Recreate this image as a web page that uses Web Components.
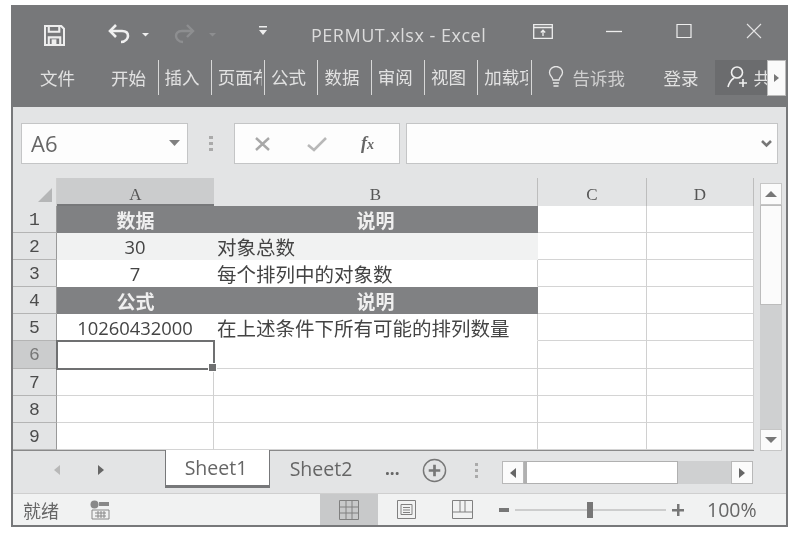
<!DOCTYPE html>
<html lang="zh">
<head>
<meta charset="utf-8">
<title>PERMUT.xlsx - Excel</title>
<style>
  html, body { margin: 0; background: #fff; }
  body { padding: 5px 0 0 11px; font-family: "Noto Sans CJK SC", sans-serif; }
</style>
</head>
<body>
<excel-window>
  <title-bar></title-bar>
  <ribbon-tabs></ribbon-tabs>
  <formula-bar></formula-bar>
  <sheet-grid></sheet-grid>
  <sheet-tabs></sheet-tabs>
  <status-bar></status-bar>
</excel-window>

<script>
const UI_FONT = '"Open Sans", "Noto Sans", "Noto Sans CJK SC", sans-serif';
const CJK_FONT = '"Noto Sans CJK SC", sans-serif';
const GRID_FONT = '"Liberation Mono", "Noto Sans CJK SC", monospace';

class ExcelWindow extends HTMLElement {
  constructor() {
    super();
    this.attachShadow({ mode: "open" });
    this.shadowRoot.innerHTML = `
      <style>
        :host {
          display: flex;
          flex-direction: column;
          width: 777px;
          height: 522px;
          box-sizing: border-box;
          border: solid #77787a;
          border-width: 0 2px 2px 2px;
          background: #e3e4e5;
          filter: blur(.35px);
        }
      </style>
      <slot></slot>
    `;
  }
}

class TitleBar extends HTMLElement {
  constructor() {
    super();
    this.attachShadow({ mode: "open" });
    this.shadowRoot.innerHTML = `
      <style>
        :host {
          display: flex;
          align-items: center;
          height: 52px;
          margin: 0 -2px;
          padding-top: 8px;
          box-sizing: border-box;
          background: #77787a;
          color: #dcdcdc;
          font: 18px ${UI_FONT};
          flex: none;
        }
        svg { display: block; flex: none; }
        .title { margin-left: 42px; width: 222px; white-space: nowrap; letter-spacing: .5px; margin-top: -1px; }
        .up { margin-bottom: 8px; }
      </style>
      <svg style="margin-left:33px" width="21" height="21" viewBox="0 0 22 22" fill="none" stroke="#eee" stroke-width="2.200">
        <path d="M1 1h17l3 3v17H1z"/><path d="M5 2v5h11V2M5 20v-7h12v7"/><path d="M8 15h5v5H8z" fill="#eee" stroke="none"/>
      </svg>
      <svg style="margin-left:43px" width="46" height="22" viewBox="0 0 46 22" fill="none">
        <path d="M2 7h12c5 0 6 3 6 5s-2 6-7 6" stroke="#f0f0f0" stroke-width="2.600"/>
        <path d="M8 1 2 7l6 6" stroke="#f0f0f0" stroke-width="2.600"/>
        <path d="M34 9h7l-3.500 3.500z" fill="#eee"/>
      </svg>
      <svg style="margin-left:18px" width="46" height="22" viewBox="0 0 46 22" fill="none">
        <path d="M20 7H10c-5 0-6 3-6 5s2 6 7 6" stroke="#8d8e90" stroke-width="2.400"/>
        <path d="M15 1l6 6-6 6" stroke="#8d8e90" stroke-width="2.400"/>
        <path d="M37 9h7l-3.500 3.500z" fill="#8d8e90"/>
      </svg>
      <svg class="up" style="margin-left:39px" width="12" height="12" viewBox="0 0 12 12" fill="#eee">
        <path d="M2 1h8v1.500H2zM2 5h8L6 10z"/>
      </svg>
      <span class="title">PERMUT.xlsx - Excel</span>
      <svg class="up" width="20" height="15" viewBox="0 0 20 15" fill="none" stroke="#eee" stroke-width="1.300">
        <path d="M.7.7h18.600v13.600H.7zM.7 3.500h18.600"/><path d="M10 12V6.500M7.800 8.500 10 6.200l2.200 2.300"/>
      </svg>
      <svg class="up" style="margin-left:53px" width="16" height="16" viewBox="0 0 16 16" stroke="#eee" stroke-width="1.300"><path d="M0 8.500h16"/></svg>
      <svg class="up" style="margin-left:54px" width="16" height="16" viewBox="0 0 16 16" fill="none" stroke="#eee" stroke-width="1.200"><path d="M1 1.500h14v13H1z"/></svg>
      <svg class="up" style="margin-left:54px" width="16" height="16" viewBox="0 0 16 16" stroke="#e4e4e4" stroke-width="1.100"><path d="M1 1l14 14M15 1 1 15"/></svg>
    `;
  }
}

class RibbonTabs extends HTMLElement {
  constructor() {
    super();
    this.attachShadow({ mode: "open" });
    const tabs = ["插入", "页面布局", "公式", "数据", "审阅", "视图", "加载项"];
    this.shadowRoot.innerHTML = `
      <style>
        :host {
          display: flex;
          align-items: center;
          height: 50px;
          margin: 0 -2px;
          padding-bottom: 10px;
          box-sizing: border-box;
          background: #77787a;
          color: #e2e2e2;
          font: 17.500px ${CJK_FONT};
          position: relative;
          flex: none;
        }
        span { white-space: nowrap; flex: none; }
        .tab { width: 53.300px; height: 35px; line-height: 34px; box-sizing: border-box; border-left: 1px solid #d8d8d8; padding-left: 6px; }
        .tab b { display: block; width: 44px; overflow: hidden; font-weight: 400; }
        .file { margin-left: 29px; width: 37px; }
        .home { margin-left: 34px; width: 46.500px; }
        .tell { border-left: 1px solid #d8d8d8; height: 35px; display: flex; align-items: center; padding-left: 16px; width: 133px; box-sizing: border-box; color: #cfcfcf; gap: 9px; }
        .login { width: 51px; }
        .share { width: 52px; height: 35px; display: flex; align-items: center; gap: 6px; padding-left: 12px; box-sizing: border-box; background: #6b6c6e; overflow: hidden; }
        .more { position: absolute; left: 756px; top: 3px; width: 19px; height: 36px; box-sizing: border-box; background: #fafafa; border: 1px solid #bbb; display: flex; align-items: center; justify-content: center; }
      </style>
      <span class="file">文件</span>
      <span class="home">开始</span>
      ${tabs.map(t => `<span class="tab"><b>${t}</b></span>`).join("")}
      <span class="tell">
        <svg width="16" height="22" viewBox="0 0 16 22" fill="none" stroke="#e6e6e6" stroke-width="1.300"><path d="M5 14c0-3-3.500-4-3.500-7.500a6.500 6 0 0 1 13 0C14.500 10 11 11 11 14zM5 17h6M5.500 20h5"/></svg>
        告诉我
      </span>
      <span class="login">登录</span>
      <span class="share">
        <svg width="21" height="22" viewBox="0 0 21 22" fill="none" stroke="#f0f0f0" stroke-width="1.600" style="flex:none"><ellipse cx="10" cy="6.500" rx="5.500" ry="5.500"/><path d="M1 21c1-4 3-7 6-9M12 17h8M16 13v8"/></svg>
        共
      </span>
      <span class="more"><svg width="5" height="8" viewBox="0 0 5 8" fill="#777"><path d="M0 0l5 4-5 4z"/></svg></span>
    `;
  }
}

class FormulaBar extends HTMLElement {
  constructor() {
    super();
    this.attachShadow({ mode: "open" });
    this.shadowRoot.innerHTML = `
      <style>
        :host {
          display: flex;
          align-items: flex-start;
          height: 71px;
          box-sizing: border-box;
          padding: 16px 0 0 8px;
          font-family: ${UI_FONT};
          color: #6c6c6c;
          flex: none;
        }
        .box { height: 41px; box-sizing: border-box; background: #fdfdfd; border: 1px solid #c4c5c6; display: flex; align-items: center; flex: none; }
        .name { width: 167px; padding: 0 7px 2px 9px; justify-content: space-between; font-size: 22px; color: #666; }
        .grip { width: 46px; height: 41px; display: flex; align-items: center; justify-content: center; flex: none; }
        .fx { width: 166px; }
        .input { width: 372px; margin-left: 6px; justify-content: flex-end; padding-right: 5px; }
        i { font: italic bold 18px "Liberation Serif", serif; color: #666; }
      </style>
      <div class="box name">A6
        <svg width="11" height="6" viewBox="0 0 11 6" fill="#808080"><path d="M0 0h11L5.500 6z"/></svg>
      </div>
      <div class="grip"><svg width="4" height="16" viewBox="0 0 4 16" fill="#aaa"><path d="M0 0h4v3H0zM0 6h4v3H0zM0 12h4v3H0z"/></svg></div>
      <div class="box fx">
        <svg style="margin-left:19px" width="18" height="16" viewBox="0 0 18 16" stroke="#a8a8a8" stroke-width="2.400"><path d="M2 2l13 12M15 2 2 14"/></svg>
        <svg style="margin-left:35px" width="20" height="16" viewBox="0 0 20 16" fill="none" stroke="#b8b8b8" stroke-width="2.600"><path d="M1 9l6 5L19 2"/></svg>
        <i style="margin-left:34px">f<span style="font-size:14px">x</span></i>
      </div>
      <div class="box input"><svg width="11" height="8" viewBox="0 0 11 8" fill="none" stroke="#777" stroke-width="2.600"><path d="M1 1l4.500 4.500L10 1"/></svg></div>
    `;
  }
}

class SheetGrid extends HTMLElement {
  constructor() {
    super();
    this.attachShadow({ mode: "open" });
    const rows = [
      ["数据", "说明", "head"],
      ["30", "对象总数", "alt"],
      ["7", "每个排列中的对象数", "plain"],
      ["公式", "说明", "head"],
      ["10260432000", "在上述条件下所有可能的排列数量", "plain"],
      ["", "", "sel"],
      ["", "", ""],
      ["", "", ""],
      ["", "", ""],
    ];
    const body = rows.map((r, i) => {
      const bCls = r[2] === "head" ? "b c" : "b";
      return `
        <div class="rh ${r[2] === "sel" ? "on" : ""}">${i + 1}</div>
        <div class="cell a ${r[2]}">${r[0]}</div>
        <div class="cell ${bCls} ${r[2]}">${r[1]}</div>
        <div class="cell"></div>
        <div class="cell"></div>`;
    }).join("");
    this.shadowRoot.innerHTML = `
      <style>
        :host {
          display: flex;
          height: 273px;
          font-family: ${GRID_FONT};
          color: #555;
          flex: none;
        }
        .grid {
          display: grid;
          grid-template-columns: 44px 157px 324px 109px 107px;
          grid-template-rows: 28px repeat(9, 27.100px);
          width: 741px;
          height: 272px;
          background: #fff;
          border-bottom: 1px solid #8a8a8a;
        }
        .corner { background: #e3e4e5; display: flex; align-items: flex-end; justify-content: flex-end; padding: 0 4px 4px 0; border-right: 1px solid #cfcfcf; }
        .ch { background: #e3e4e5; border-right: 1px solid #bdbdbd; text-align: center; font: 17px/34px "Liberation Serif", serif; overflow: hidden; }
        .ch.on { background: #cbcccd; border-bottom: 2px solid #77787a; border-right: 0; }
        .rh { background: #e3e4e5; border-bottom: 1px solid #b4b4b4; border-right: 1px solid #999; text-align: center; font-size: 18px; line-height: 29px; color: #4c4c4c; overflow: hidden; }
        .rh.on { background: #cbcccd; color: #777; border-right-color: #77787a; }
        .cell { border-right: 1px solid #d0d0d0; border-bottom: 1px solid #d4d4d4; font: 19.500px/27px "Noto Sans CJK SC", sans-serif; white-space: nowrap; overflow: hidden; color: #444; }
        .a { text-align: center; font-family: "Open Sans", "Noto Sans CJK SC", sans-serif; font-size: 18.400px; }
        .b { padding-left: 3px; }
        .c { text-align: center; padding-left: 0; }
        .head { background: #808183; color: #efefef; font-weight: 700; font-size: 19px; font-family: "Noto Sans CJK SC", sans-serif; border-color: #808183; }
        .head.a { border-right: 0; }
        .alt { background: #f1f2f2; border-color: #f1f2f2; }
        .plain.a { border-right-color: #fff; }
        .plain { border-bottom-color: #fff; }
        .sel { outline: 2px solid #6f7071; outline-offset: -1px; position: relative; overflow: visible; }
        .sel.a { z-index: 1; }
        .sel.a::after { content: ""; position: absolute; right: -4px; bottom: -4px; width: 7px; height: 7px; background: #6f7071; border: 1px solid #fff; }
        .sel.b { outline: 0; }
        .bar { width: 22px; margin-left: 6px; display: flex; flex-direction: column; padding-top: 5px; box-sizing: border-box; flex: none; }
        .btn { height: 22px; background: #fbfbfb; border: 1px solid #c6c6c6; box-sizing: border-box; display: flex; align-items: center; justify-content: center; flex: none; }
        .thumb { height: 100px; background: #fbfbfb; border: 1px solid #bcbcbc; box-sizing: border-box; flex: none; }
        .track { flex: 1; background: #cfd0d1; }
      </style>
      <div class="grid">
        <div class="corner"><svg width="14" height="14" viewBox="0 0 14 14" fill="#b5b6b7"><path d="M14 0v14H0z"/></svg></div>
        <div class="ch on">A</div><div class="ch">B</div><div class="ch">C</div><div class="ch">D</div>
        ${body}
      </div>
      <div class="bar">
        <div class="btn"><svg width="12" height="6" viewBox="0 0 12 6" fill="#777"><path d="M0 6l6-6 6 6z"/></svg></div>
        <div class="thumb"></div>
        <div class="track"></div>
        <div class="btn"><svg width="12" height="6" viewBox="0 0 12 6" fill="#777"><path d="M0 0l6 6 6-6z"/></svg></div>
      </div>
    `;
  }
}

class SheetTabs extends HTMLElement {
  constructor() {
    super();
    this.attachShadow({ mode: "open" });
    this.shadowRoot.innerHTML = `
      <style>
        :host {
          display: flex;
          align-items: flex-start;
          height: 42px;
          font: 19.500px ${UI_FONT};
          color: #666;
          flex: none;
        }
        .nav { width: 152px; height: 37px; display: flex; align-items: center; padding-left: 41px; gap: 38px; box-sizing: border-box; flex: none; }
        .tab { width: 105px; height: 37px; box-sizing: border-box; text-align: center; line-height: 35px; flex: none; }
        .cur { background: #fff; border: solid #77787a; border-width: 0 1px 3px 1px; margin-top: -1px; height: 38px; padding-right: 3px; }
        .next { padding-right: 3px; }
        .dots { margin-left: 10px; width: 37px; font-size: 17px; font-weight: 700; line-height: 36px; flex: none; }
        .plus { margin-top: 7px; flex: none; display: block; }
        .grip { margin-left: 28px; margin-top: 12px; flex: none; display: block; }
        .hs { margin: 10px 0 0 23px; display: flex; width: 251px; height: 23px; flex: none; background: #cfd0d1; }
        .b { width: 22px; background: #fbfbfb; border: 1px solid #b8b8b8; box-sizing: border-box; display: flex; align-items: center; justify-content: center; flex: none; }
        .t { width: 154px; background: #fff; border: 1px solid #b0b0b0; border-left-width: 3px; box-sizing: border-box; flex: none; }
        .g { flex: 1; }
      </style>
      <div class="nav">
        <svg width="6" height="10" viewBox="0 0 6 10" fill="#b8b8b8"><path d="M6 0v10L0 5z"/></svg>
        <svg width="6" height="10" viewBox="0 0 6 10" fill="#666"><path d="M0 0v10l6-5z"/></svg>
      </div>
      <div class="tab cur">Sheet1</div>
      <div class="tab next">Sheet2</div>
      <div class="dots">...</div>
      <svg class="plus" width="25" height="25" viewBox="0 0 26 26" fill="none" stroke="#777"><circle cx="13" cy="13" r="11.500" stroke-width="1.500"/><path d="M13 7v12M7 13h12" stroke-width="2.800"/></svg>
      <svg class="grip" width="4" height="16" viewBox="0 0 4 16" fill="#aaa"><path d="M0 0h3v3H0zM0 6h3v3H0zM0 12h3v3H0z"/></svg>
      <div class="hs">
        <div class="b"><svg width="6" height="10" viewBox="0 0 6 10" fill="#666"><path d="M6 0v10L0 5z"/></svg></div>
        <div class="t"></div>
        <div class="g"></div>
        <div class="b"><svg width="6" height="10" viewBox="0 0 6 10" fill="#666"><path d="M0 0v10l6-5z"/></svg></div>
      </div>
    `;
  }
}

class StatusBar extends HTMLElement {
  constructor() {
    super();
    this.attachShadow({ mode: "open" });
    this.shadowRoot.innerHTML = `
      <style>
        :host {
          display: flex;
          align-items: center;
          flex: 1;
          background: #f1f2f2;
          border-top: 1px solid #cfcfcf;
          font: 18px ${CJK_FONT};
          color: #666;
        }
        .ready { margin-left: 10px; width: 67px; flex: none; }
        svg { display: block; flex: none; }
        .view { margin-left: 210px; width: 58px; height: 100%; background: #c8c9ca; display: flex; align-items: center; justify-content: center; flex: none; }
        .pct { margin-left: 23px; font: 19.500px ${UI_FONT}; }
      </style>
      <span class="ready">就绪</span>
      <svg width="20" height="20" viewBox="0 0 20 20" fill="none">
        <circle cx="4.500" cy="4.500" r="4" fill="#888"/><path d="M9 2h10v4H9z" fill="#888"/>
        <path d="M2 10h17v9H2z" stroke="#888"/><path d="M5 13h11M5 16h11M8 11v7M11 11v7M14 11v7" stroke="#888"/>
      </svg>
      <div class="view"><svg width="20" height="20" viewBox="0 0 20 20" fill="none" stroke="#808080"><path d="M.5.5h19v19H.5zM.5 7h19M.5 13h19M7 .5v19M13 .5v19"/></svg></div>
      <svg style="margin-left:19px" width="19" height="19" viewBox="0 0 19 19" fill="none" stroke="#808080"><path d="M.5.5h18v18H.5zM4 4.500h11v10H4zM6 7.500h7M6 10h7M6 12.500h7"/></svg>
      <svg style="margin-left:36px" width="21" height="19" viewBox="0 0 21 19" fill="none" stroke="#808080"><path d="M.5.5h20v18H.5zM.5 12h20M8 .5V12M13 .5V12"/></svg>
      <svg style="margin-left:26px" width="10" height="4" viewBox="0 0 10 4" fill="#777"><path d="M0 0h10v4H0z"/></svg>
      <svg style="margin-left:6px" width="151" height="16" viewBox="0 0 151 16"><path d="M0 8h151" stroke="#a8a8a8"/><path d="M72 0h6v16h-6z" fill="#777"/></svg>
      <svg style="margin-left:6px" width="12" height="12" viewBox="0 0 12 12" fill="#777"><path d="M5 0h2.500v5H12v2.500H7.500V12H5V7.500H0V5h5z"/></svg>
      <span class="pct">100%</span>
    `;
  }
}

customElements.define("excel-window", ExcelWindow);
customElements.define("title-bar", TitleBar);
customElements.define("ribbon-tabs", RibbonTabs);
customElements.define("formula-bar", FormulaBar);
customElements.define("sheet-grid", SheetGrid);
customElements.define("sheet-tabs", SheetTabs);
customElements.define("status-bar", StatusBar);
</script>
</body>
</html>
